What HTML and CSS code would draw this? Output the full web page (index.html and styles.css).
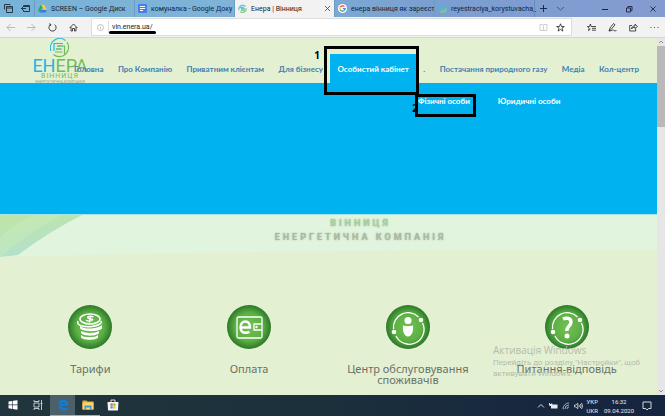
FILE: index.html
```html
<!DOCTYPE html>
<html lang="uk">
<head>
  <meta charset="UTF-8" />
  <title>Енера | Вінниця</title>
  <link rel="stylesheet" href="styles.css">
</head>
<body>
  <!-- Browser tabs -->
  <div class="tabs">
    <div class="tab-tools">
      <svg width="9" height="9" viewBox="0 0 9 9" fill="none" stroke="#263b48"><path d="M.5 5.500V.5h6M2.500 2.500h6v6h-6zM2.500 4h6"/></svg>
      <svg width="9" height="9" viewBox="0 0 9 9" fill="none" stroke="#263b48"><path d="M2.500 3V1.500h6v6h-6V6M2.500 2.500h6M0 4.500h5M2 3L.5 4.500 2 6"/></svg>
    </div>
    <div class="tab">
      <svg width="9" height="9" viewBox="0 0 9 9"><path d="M3 .5h3L3 6 1.500 8.500 0 6z" fill="#2bab63"/><path d="M3 .5h3L9 6H6z" fill="#fbcb35"/><path d="M3 6h6L7.500 8.500h-6z" fill="#3a7be8"/></svg>
      <span>SCREEN – Google Диск</span>
    </div>
    <div class="tab">
      <svg width="9" height="9" viewBox="0 0 9 9"><rect width="9" height="9" rx="1" fill="#3f82ef"/><path d="M2 2.500h5M2 4.500h5M2 6.500h3" stroke="#fff"/></svg>
      <span>комуналка - Google Доку</span>
    </div>
    <div class="tab active">
      <svg width="9" height="9" viewBox="0 0 9 9" fill="none" stroke-width="1.300"><path d="M1 6a3.800 3.800 0 0 1 6.500-3.500M2 3.500h4M3 5h4" stroke="#5cc3d9"/><path d="M8 4a3.600 3.600 0 0 1-6 3.500M3 6.500h4" stroke="#8fd08b"/></svg>
      <span>Енера | Вінниця</span>
      <button class="close" aria-label="Закрити"><svg width="7" height="7" viewBox="0 0 7 7" stroke="#444" stroke-width=".8"><path d="M1 1l5 5M6 1L1 6"/></svg></button>
    </div>
    <div class="tab">
      <svg width="9" height="9" viewBox="0 0 9 9" fill="none"><circle cx="4.500" cy="4.500" r="4.500" fill="#fff"/><g stroke-width="1.200"><path d="M2.200 3.200a2.700 2.700 0 0 1 4.300-.6" stroke="#e8453c"/><path d="M2.200 3.200a2.700 2.700 0 0 0 0 2.600" stroke="#f8b90b"/><path d="M2.200 5.800a2.700 2.700 0 0 0 4 .8" stroke="#34a853"/><path d="M6.200 6.600a2.700 2.700 0 0 0 1-2H4.800" stroke="#4285f4"/></g></svg>
      <span>енера вінниця як зареєст</span>
    </div>
    <div class="tab">
      <svg width="9" height="9" viewBox="0 0 9 9" fill="none" stroke-width="1.300"><path d="M1 6a3.800 3.800 0 0 1 6.500-3.500M2 3.500h4M3 5h4" stroke="#4fb5dc"/><path d="M8 4a3.600 3.600 0 0 1-6 3.500M3 6.500h4" stroke="#7fc79b"/></svg>
      <span>reyestraciya_korystuvacha_</span>
    </div>
    <div class="tab-new">
      <button aria-label="Нова вкладка"><svg width="9" height="9" viewBox="0 0 9 9" stroke="#1d2c4a"><path d="M4.500 1v7M1 4.500h7"/></svg></button>
      <button aria-label="Список вкладок"><svg width="9" height="9" viewBox="0 0 9 9" fill="none" stroke="#33476d" stroke-width=".8"><path d="M1 3l3.500 3L8 3"/></svg></button>
    </div>
    <div class="window-buttons">
      <button aria-label="Згорнути"><svg width="8" height="8" viewBox="0 0 8 8" stroke="#1a2540"><path d="M1 4.500h6"/></svg></button>
      <button aria-label="Розгорнути"><svg width="8" height="8" viewBox="0 0 8 8" fill="none" stroke="#1a2540" stroke-width=".9"><path d="M1.500 3h4v4h-4zM3 3V1.500h4v4H5.500"/></svg></button>
      <button aria-label="Закрити вікно"><svg width="8" height="8" viewBox="0 0 8 8" stroke="#1a2540" stroke-width=".9"><path d="M1.500 1.500l5 5M6.500 1.500l-5 5"/></svg></button>
    </div>
  </div>

  <!-- Address bar -->
  <div class="toolbar">
    <div class="nav-buttons">
      <button aria-label="Назад"><svg width="9" height="9" viewBox="0 0 9 9" fill="none" stroke="#aaa" stroke-width=".8"><path d="M9 4.500H1M4.500 1L1 4.500 4.500 8"/></svg></button>
      <button aria-label="Вперед"><svg width="9" height="9" viewBox="0 0 9 9" fill="none" stroke="#aaa" stroke-width=".8"><path d="M0 4.500h8M4.500 1L8 4.500 4.500 8"/></svg></button>
      <button aria-label="Оновити"><svg width="9" height="9" viewBox="0 0 9 9" fill="none" stroke="#333" stroke-width=".9"><path d="M2.500 1.500a3.600 3.600 0 1 0 4 0M1 .8l1.800.5L2.500 3"/></svg></button>
      <button aria-label="Додому"><svg width="9" height="9" viewBox="0 0 9 9" fill="none" stroke="#333" stroke-width=".9"><path d="M.5 5l4-4 4 4M2 4v4h1.500V5.500h2V8H7V4"/></svg></button>
    </div>
    <div class="address">
      <svg width="7" height="7" viewBox="0 0 7 7" fill="none" stroke="#aaa" stroke-width=".7"><circle cx="3.500" cy="3.500" r="3"/><path d="M3.500 3v2.200M3.500 1.600v.7"/></svg>
      <input type="text" value="vin.enera.ua/" aria-label="Адреса">
      <span class="mark-line"></span>
      <svg width="9" height="9" viewBox="0 0 9 9" fill="none" stroke="#c4c4c4" stroke-width=".8"><path d="M1 1.500h3l.5.500.5-.5h3v6H1zM4.500 2v5.500"/></svg>
      <svg width="9" height="9" viewBox="0 0 9 9" fill="none" stroke="#222" stroke-width=".8"><path d="M4.500.8l1 2.700h2.800L6 5.200l.9 2.900-2.400-1.700-2.400 1.700.9-2.900L.7 3.500h2.800z"/></svg>
    </div>
    <div class="tools">
      <button aria-label="Вибране"><svg width="9" height="9" viewBox="0 0 9 9" fill="none" stroke="#222" stroke-width=".8"><path d="M5 3.500h-.8L3.400 1l-.8 2.500H.5l1.700 1.600-.7 2.400 2-1.400M5 3.500h4M5 5.300h4M5 7.200h4"/></svg></button>
      <button aria-label="Нотатки"><svg width="9" height="9" viewBox="0 0 9 9" fill="none" stroke="#222" stroke-width=".8"><path d="M1 8l1-3 3.500-4.500L7 1.800 3.500 6zM1 8c3 0 4-2 4.500-1s1 1 3 .5"/></svg></button>
      <button aria-label="Поділитися"><svg width="9" height="9" viewBox="0 0 9 9" fill="none" stroke="#222" stroke-width=".8"><path d="M3 2.500H.7v5.500h6V6M2.500 6c.3-2.300 1.500-3 3.500-3V1.200l2.500 2.300L6 5.600V4.300C4.500 4.300 3.300 4.600 2.500 6z"/></svg></button>
      <button aria-label="Ще"><svg width="9" height="9" viewBox="0 0 9 9" fill="#444"><circle cx="1" cy="4.500" r=".6"/><circle cx="4.500" cy="4.500" r=".6"/><circle cx="8" cy="4.500" r=".6"/></svg></button>
    </div>
  </div>

  <div class="view">
    <div class="page">
      <header class="site-header">
        <a class="logo" href="#">
          <svg width="20" height="20" viewBox="0 0 20 20" fill="none" stroke-width="1.200">
            <path d="M1 13A9.300 9.300 0 0 1 15.500 2.500M4 13V5.500h9" stroke="#2cb7dc"/>
            <path d="M17 4A9.300 9.300 0 0 1 3.500 16.500M7 8h7.500v9M6 11h6M5 14h7.500" stroke="#6fbd55"/>
            <path d="M7 8h6M6 11h5" stroke="#4dbb9c"/>
          </svg>
          <span class="logo-name"><b>ЕН</b>ЕРА</span>
          <span class="logo-city">ВІННИЦЯ</span>
          <span class="logo-sub">ЕНЕРГЕТИЧНА КОМПАНІЯ</span>
        </a>
        <nav class="menu">
          <a href="#">Головна</a>
          <a href="#">Про Компанію</a>
          <a href="#">Приватним клієнтам</a>
          <a href="#">Для бізнесу</a>
          <a href="#" class="current">Особистий кабінет</a>
          <a href="#">.</a>
          <a href="#">Постачання природного газу</a>
          <a href="#">Медіа</a>
          <a href="#">Кол-центр</a>
        </nav>
      </header>

      <div class="submenu">
        <a href="#">Фізичні особи</a>
        <a href="#">Юридичні особи</a>
      </div>

      <section class="hero">
        <svg class="hero-bg" viewBox="0 0 657 44" preserveAspectRatio="none">
          <defs>
            <linearGradient id="leaf" x1="0" y1="0" x2=".4" y2="1">
              <stop offset="0" stop-color="#bfe6a2"/>
              <stop offset="1" stop-color="#b2e0cf"/>
            </linearGradient>
          </defs>
          <path d="M0 0h657v36Q300 35 0 43z" fill="#e1f4dd"/>
          <path d="M0 0h84Q48 18 18 41L0 43z" fill="url(#leaf)"/>
          <path d="M34 0h30Q28 18 2 42L0 43V24Q14 10 34 0z" fill="#c8ebbb" opacity=".5"/>
          <path d="M0 .5h657" stroke="#a9e4e2"/>
        </svg>
        <div class="hero-text">
          <p class="hero-city">ВІННИЦЯ</p>
          <p>ЕНЕРГЕТИЧНА КОМПАНІЯ</p>
        </div>
      </section>

      <section class="services">
        <a href="#" class="service">
          <span class="circle">
            <svg width="44" height="44" viewBox="0 0 44 44" fill="none" stroke="#fff" stroke-width="1.500">
              <path d="M13 30v2.500c2 3 15 3 17 0V30c-3 3-14 3-17 0z" fill="#fff" stroke="none"/>
              <path d="M13 26v2c2 3.500 16 3.500 18 0v-2c-4 2.500-14 2.500-18 0zM12 21v2.500c3 3.500 19 3.500 22 0V20c-4 4-17 5-22 1z" fill="#fff" stroke="none"/>
              <path d="M10 16c-1 2 0 4 4 5 6 1.500 14 .5 18-2 2-1.500 1.500-2 .5-3" />
              <ellipse cx="22" cy="14" rx="10" ry="5"/>
              <path d="M25.500 12c-3-1.500-7-.5-5.500 1s5.500.5 4.500 2-4.500 1.500-6.500.3M22.500 10.500l-1 7" stroke-width="1.300"/>
            </svg>
          </span>
          <span class="caption">Тарифи</span>
        </a>
        <a href="#" class="service">
          <span class="circle">
            <svg width="44" height="44" viewBox="0 0 44 44" fill="none" stroke="#fff" stroke-width="1.300">
              <rect x="10" y="12" width="25" height="21" rx="1.500"/>
              <path d="M35 19h-8v6h8"/>
              <circle cx="29.500" cy="22" r="1.200" fill="#fff" stroke="none"/>
              <path d="M13.500 22.500h9.500c0-4-1.800-6-4.600-6-3 0-4.900 2.300-4.900 5.700 0 3.500 2 5.600 5.200 5.600 1.500 0 2.700-.3 3.800-.9" stroke-width="2.400"/>
            </svg>
          </span>
          <span class="caption">Оплата</span>
        </a>
        <a href="#" class="service">
          <span class="circle">
            <svg width="44" height="44" viewBox="0 0 44 44" fill="none" stroke="#fff" stroke-width="1.300">
              <path d="M7.500 24A14.700 14.700 0 0 1 32.500 12M36.500 18A14.700 14.700 0 0 1 10 31"/>
              <g fill="#fff" stroke="none">
                <circle cx="35" cy="15" r="2.300"/><circle cx="8" cy="27" r="2.300"/>
                <circle cx="22" cy="15.500" r="3.500"/>
                <path d="M17 20.500c3 1 7 1 10 0 .6 5-1 11-5 11s-5.600-6-5-11z"/>
              </g>
            </svg>
          </span>
          <span class="caption">Центр обслуговування споживачів</span>
        </a>
        <a href="#" class="service">
          <span class="circle">
            <svg width="44" height="44" viewBox="0 0 44 44" fill="none" stroke="#fff" stroke-width="1.300">
              <path d="M7.500 24A14.700 14.700 0 0 1 32.500 12M36.500 18A14.700 14.700 0 0 1 10 31"/>
              <g fill="#fff" stroke="none">
                <circle cx="35" cy="15" r="2.300"/><circle cx="8" cy="27" r="2.300"/>
                <circle cx="22" cy="31" r="2.500"/>
              </g>
              <path d="M18 14c3-1.500 8-1 8 3 0 4-4.200 3.800-4.200 9" stroke-width="3.400"/>
            </svg>
          </span>
          <span class="caption">Питання-відповідь</span>
        </a>
      </section>

      <div class="watermark">
        <p class="watermark-title">Активація Windows</p>
        <p>Перейдіть до розділу "Настройки", щоб<br>активувати Windows.</p>
      </div>

      <!-- Step marks -->
      <div class="step step-one"><span>1</span></div>
      <div class="step step-two"><span>2</span></div>
    </div>

    <div class="scrollbar">
      <svg width="8" height="8" viewBox="0 0 8 8" fill="none" stroke="#888" stroke-width=".9"><path d="M2 5l2-2 2 2"/></svg>
      <div class="thumb"></div>
      <svg width="8" height="8" viewBox="0 0 8 8" fill="none" stroke="#888" stroke-width=".9"><path d="M2 3l2 2 2-2"/></svg>
    </div>
  </div>

  <footer class="taskbar">
    <button aria-label="Пуск"><svg width="10" height="10" viewBox="0 0 10 10" fill="#fff"><path d="M.5 1.500l3.800-.6v3.700H.5zM4.900.8L9.500.2v4.400H4.900zM.5 5.200h3.800v3.700l-3.800-.6zM4.900 5.200h4.600v4.500L4.900 9z"/></svg></button>
    <button aria-label="Подання завдань"><svg width="10" height="10" viewBox="0 0 10 10" fill="none" stroke="#cfd6d9" stroke-width=".9"><path d="M1 3h5v4H1zM1 0v1.500h5V0M1 10V8.500h5V10M8.500 0v10M7.500 3.500h2"/></svg></button>
    <button class="opened" aria-label="Edge"><svg width="12" height="12" viewBox="0 0 12 12"><path d="M1 5.500C1.500 2 4 .5 6.500.5 9.500.5 11.500 3 11.300 6.500H4.500c.2 3 4 3.200 6 2v2.200C6.500 12.700 2 11.200 2.200 7.200 2.300 5.500 3.200 4 4.800 3.200 3.500 3.300 2 4.200 1 5.500zM4.700 4.700h3.700c0-2.300-3.200-2.500-3.700 0z" fill="#0d7de0"/></svg></button>
    <button class="running" aria-label="Провідник"><svg width="12" height="12" viewBox="0 0 12 12"><path d="M.5 1.500h4l1 1h6v8H.5z" fill="#e9a92e"/><path d="M.5 3.500h11v7H.5z" fill="#fcd767"/><path d="M2.500 11V6.500h7V11H8V8.500H4V11z" fill="#3d98dc"/></svg></button>
    <button aria-label="Магазин"><svg width="12" height="12" viewBox="0 0 12 12"><path d="M4 3V1h4v2" fill="none" stroke="#ddd"/><path d="M.5 3h11l-.5 8.500H1z" fill="#f5f5f5"/><path d="M3.500 4.500h2.200v2.200H3.500z" fill="#e8502d"/><path d="M6.300 4.500h2.200v2.200H6.300z" fill="#7db829"/><path d="M3.500 7.300h2.200v2.200H3.500z" fill="#25a1e3"/><path d="M6.300 7.300h2.200v2.200H6.300z" fill="#f9b716"/></svg></button>
    <div class="tray">
      <svg width="8" height="8" viewBox="0 0 8 8" fill="none" stroke="#e8ebf0" stroke-width=".9"><path d="M1 5.500l3-3 3 3"/></svg>
      <svg width="9" height="8" viewBox="0 0 9 8" fill="#e8ebf0"><path d="M2 2.500h6.500v4H2zM0 1h1v1h1.500V1h.7v2L2 4H.8L0 3z"/></svg>
      <svg width="8" height="8" viewBox="0 0 8 8" fill="none" stroke="#c4cad6" stroke-width=".8"><path d="M1 7a6 6 0 0 1 6-6M3 7a4 4 0 0 1 4-4M5 7a2 2 0 0 1 2-2M1 7h.5"/></svg>
      <svg width="9" height="8" viewBox="0 0 9 8" fill="none" stroke="#dfe3ea" stroke-width=".8"><path d="M.5 3h1.300l2-1.700v5.400L1.800 5H.5zM5 3q.8 1 0 2M6.300 2q1.600 2 0 4M7.500 1q2.200 3 0 6"/></svg>
      <div class="lang">УКР<br>UKR</div>
      <div class="clock">16:32<br>09.04.2020</div>
      <svg width="10" height="10" viewBox="0 0 10 10" fill="none" stroke="#e8ebf0" stroke-width=".9"><path d="M1 1h8v6.500H6.500L5 9 3.800 7.500H1z"/></svg>
    </div>
  </footer>
</body>
</html>
```
FILE: styles.css
```css
* {
  box-sizing: border-box;
}

body {
  margin: 0;
  min-height: 100vh;
  display: flex;
  flex-direction: column;
  font-family: Roboto, "Liberation Sans", sans-serif;
  font-size: 8px;
  background: #e4f0d2;
}

a {
  text-decoration: none;
}

p {
  margin: 0;
}

svg {
  display: block;
  flex: none;
}

button {
  display: flex;
  align-items: center;
  justify-content: center;
  padding: 0;
  border: none;
  background: none;
}

/* Tabs */
.tabs {
  display: flex;
  height: 17px;
  background: linear-gradient(90deg, #78b4d8, #7fb2d6 35%, #7a9fd0 65%, #859bd0);
  color: #14243a;
  font-size: 7px;
}

.tab-tools {
  display: flex;
  align-items: center;
  justify-content: space-around;
  width: 34px;
}

.tab {
  display: flex;
  align-items: center;
  gap: 4px;
  flex: 0 1 100px;
  min-width: 0;
  padding: 0 3px;
  border-left: 1px solid #6b9cc4;
  white-space: nowrap;
}

.tab.active {
  background: #f2f2f2;
  color: #222;
}

.close {
  margin-left: auto;
}

.tab-new {
  display: flex;
  gap: 8px;
  padding-left: 4px;
  border-left: 1px solid #6b8bbf;
}

.window-buttons {
  display: flex;
  gap: 16px;
  margin-left: auto;
  padding-right: 8px;
}

/* Address bar */
.toolbar {
  display: flex;
  align-items: center;
  height: 21px;
  background: #f2f2f2;
  border-bottom: 1px solid #d5d5d5;
}

.nav-buttons {
  display: flex;
  gap: 12px;
  width: 91px;
  padding-left: 6px;
}

.address {
  position: relative;
  display: flex;
  align-items: center;
  gap: 8px;
  flex: 1;
  height: 18px;
  padding: 0 6px 0 5px;
  background: #fff;
  border: 1px solid #ddd;
}

.address input {
  flex: 1;
  min-width: 0;
  height: 12px;
  margin-left: -4px;
  padding: 0 0 0 3px;
  border: none;
  border-left: 1px solid #ddd;
  outline: none;
  background: none;
  color: #222;
  font-family: inherit;
  font-size: 7px;
}

.mark-line {
  position: absolute;
  left: 17px;
  bottom: 1px;
  width: 47px;
  height: 3px;
  border-radius: 2px;
  background: #000;
}

.tools {
  display: flex;
  gap: 12px;
  padding: 0 6px 0 15px;
}

/* Page */
.view {
  display: flex;
  flex: 1;
}

.page {
  position: relative;
  flex: 1;
  overflow: hidden;
}

.site-header {
  position: relative;
  height: 45px;
  padding: 0 11px 0 67px;
}

.logo {
  position: absolute;
  left: 32px;
  top: 0;
  display: flex;
  flex-direction: column;
  align-items: center;
  width: 56px;
  color: #6fbd55;
  white-space: nowrap;
}

.logo-name {
  font-size: 18px;
  line-height: 16px;
}

.logo-name b {
  color: #1fb5e6;
  font-weight: 400;
}

.logo-city {
  font-size: 7px;
  line-height: 5px;
  letter-spacing: 1px;
}

.logo-sub {
  font-size: 4px;
  line-height: 5px;
  color: #93a491;
}

.menu {
  display: flex;
  justify-content: space-between;
  align-items: flex-end;
  height: 100%;
}

.menu a {
  position: relative;
  height: 29px;
  padding: 0 7px;
  color: #3f7fb0;
  font-family: Lato, sans-serif;
  font-weight: 700;
  line-height: 30px;
  white-space: nowrap;
}

.menu .current {
  background: #00b2f0;
  color: #fff;
}

.submenu {
  display: flex;
  gap: 28px;
  height: 131px;
  padding: 12px 0 0 418px;
  background: #00b2f0;
}

.submenu a {
  color: #fff;
  font-family: Lato, sans-serif;
  font-weight: 700;
  line-height: 12px;
}

.hero {
  position: relative;
  height: 44px;
}

.hero-bg {
  width: 100%;
  height: 100%;
}

.hero-text {
  position: absolute;
  inset: 2px 0 auto;
  padding-left: 64px;
  text-align: center;
  color: #aab9a2;
  font-size: 9px;
  font-weight: 700;
  line-height: 14px;
  letter-spacing: 3px;
  text-shadow: 0 0 2px #a5b59c;
}

.hero-city {
  color: #a3cf97;
}

/* Services */
.services {
  display: grid;
  grid-template-columns: repeat(4, 1fr);
  padding: 47px 11px 0;
}

.service {
  display: flex;
  flex-direction: column;
  align-items: center;
  gap: 14px;
  padding: 0 16px;
  color: #687268;
}

.circle {
  border-radius: 50%;
  background: radial-gradient(circle, #72c153, #5db044 45%, #2d7a2a 70%);
}

.caption {
  font-family: "Noto Sans", sans-serif;
  font-size: 11px;
  line-height: 11px;
  text-align: center;
}

.watermark {
  position: absolute;
  right: 8px;
  bottom: 16px;
  width: 156px;
  color: #b3bcab;
  font-size: 8px;
  line-height: 11px;
}

.watermark-title {
  font-family: "Open Sans", sans-serif;
  font-size: 10px;
  line-height: 13px;
}

/* Step marks */
.step {
  position: absolute;
  border: 3px solid #000;
  color: #000;
  font-family: "Noto Sans", sans-serif;
  font-size: 10px;
  font-weight: 700;
  line-height: 12px;
}

.step span {
  position: absolute;
  right: 100%;
}

.step-one {
  left: 324px;
  top: 8px;
  width: 95px;
  height: 49px;
}

.step-one span {
  margin-right: 7px;
}

.step-two {
  left: 415px;
  top: 56px;
  width: 61px;
  height: 23px;
}

.step-two span {
  bottom: 0;
}

.scrollbar {
  display: flex;
  flex-direction: column;
  width: 8px;
  background: #e6e6e6;
}

.thumb {
  height: 81px;
  margin-bottom: auto;
  background: #b9b9b9;
}

/* Taskbar */
.taskbar {
  display: flex;
  height: 21px;
  background: linear-gradient(90deg, #20353c, #1c313b 40%, #152440);
}

.taskbar button {
  width: 25px;
  border-bottom: 1px solid transparent;
}

.taskbar .opened {
  background: #4b6069;
  border-color: #78b8ec;
}

.taskbar .running {
  border-color: #78b8ec;
}

.tray {
  display: flex;
  align-items: center;
  gap: 4px;
  margin-left: auto;
  padding-right: 13px;
  color: #e8ebf0;
  font-size: 6px;
  line-height: 9px;
}

.clock {
  width: 34px;
  margin-right: 2px;
  text-align: center;
}
```
